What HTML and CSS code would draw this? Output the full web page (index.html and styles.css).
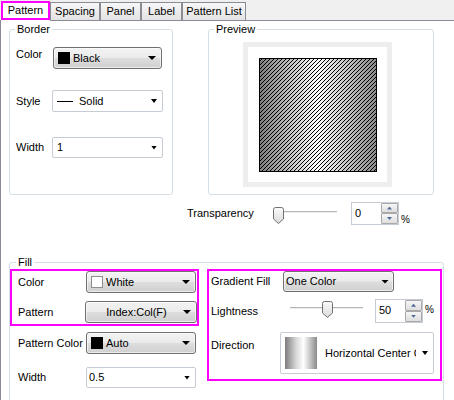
FILE: index.html
```html
<!DOCTYPE html>
<html lang="en">
<head>
<meta charset="utf-8">
<title>Pattern</title>
<link rel="stylesheet" href="styles.css">
</head>
<body>
<div class="tabbar">
  <div class="tab tab-sel">Pattern</div>
  <div class="tab tab-spacing">Spacing</div>
  <div class="tab tab-panel">Panel</div>
  <div class="tab tab-label">Label</div>
  <div class="tab tab-plist">Pattern List</div>
</div>
<div class="page">
  <div class="top-row">
    <fieldset class="group group-border">
      <legend class="legend-border">Border</legend>
      <div class="row row-bcolor">
        <span class="lbl lbl-bcolor">Color</span>
        <div class="combo combo-btn combo-bcolor">
          <span class="swatch swatch-black"></span>
          <span class="ctext ctext-swatch">Black</span>
          <span class="arrow"></span>
        </div>
      </div>
      <div class="row row-bstyle">
        <span class="lbl lbl-b2">Style</span>
        <div class="combo combo-edit combo-bwide">
          <span class="line-sample"></span>
          <span class="ctext ctext-solid">Solid</span>
          <span class="arrow arrow-sm"></span>
        </div>
      </div>
      <div class="row row-bwidth">
        <span class="lbl lbl-b2">Width</span>
        <div class="combo combo-edit combo-bwide combo-short">
          <span class="ctext ctext-pad4">1</span>
          <span class="arrow arrow-sm"></span>
        </div>
      </div>
    </fieldset>
    <fieldset class="group group-preview">
      <legend class="legend-preview">Preview</legend>
      <div class="frame">
        <svg class="pattern" width="118" height="114" viewBox="0 0 118 114">
          <defs>
            <linearGradient id="pgrad" x1="0" y1="0" x2="1" y2="0">
              <stop offset="0" stop-color="#7c7c7c"/>
              <stop offset="0.5" stop-color="#ffffff"/>
              <stop offset="1" stop-color="#888888"/>
            </linearGradient>
            <pattern id="hatch" width="4" height="4" patternUnits="userSpaceOnUse">
              <rect x="3" y="0" width="1" height="1" fill="#000"/>
              <rect x="2" y="1" width="1" height="1" fill="#000"/>
              <rect x="1" y="2" width="1" height="1" fill="#000"/>
              <rect x="0" y="3" width="1" height="1" fill="#000"/>
            </pattern>
          </defs>
          <rect width="118" height="114" fill="url(#pgrad)"/>
          <rect width="118" height="114" fill="url(#hatch)" shape-rendering="crispEdges"/>
          <rect x="0.5" y="0.5" width="117" height="113" fill="none" stroke="#000" shape-rendering="crispEdges"/>
        </svg>
      </div>
    </fieldset>
  </div>

  <div class="row row-trans">
    <span class="lbl lbl-trans">Transparency</span>
    <svg class="slider slider-trans" width="64" height="23" viewBox="0 0 64 23">
      <defs>
        <linearGradient id="thumb1" x1="0" y1="0" x2="0" y2="1">
          <stop offset="0" stop-color="#fbfbfb"/>
          <stop offset="1" stop-color="#dadada"/>
        </linearGradient>
      </defs>
      <rect x="4" y="9" width="60" height="1" fill="#b6b6b6"/>
      <rect x="4" y="10" width="60" height="1" fill="#ececec"/>
      <path d="M0.5 2.5 Q0.5 0.5 2.5 0.5 H8.5 Q10.5 0.5 10.5 2.5 V12 L5.5 16.5 L0.5 12 Z" transform="translate(0 5)" fill="url(#thumb1)" stroke="#707070"/>
    </svg>
    <div class="spin spin-trans">
      <span class="spin-val">0</span>
      <div class="spin-btns">
        <span class="spin-btn spin-up"><span class="tri tri-up"></span></span>
        <span class="spin-btn spin-down"><span class="tri tri-down"></span></span>
      </div>
    </div>
    <span class="pct pct-trans">%</span>
  </div>

  <fieldset class="group group-fill">
    <legend class="legend-fill">Fill</legend>
    <div class="fill-cols">
      <div class="fill-left">
        <div class="hl hl-left">
          <div class="row row-fcolor">
            <span class="lbl lbl-f">Color</span>
            <div class="combo combo-btn combo-f">
              <span class="swatch swatch-white"></span>
              <span class="ctext ctext-swatch">White</span>
              <span class="arrow"></span>
            </div>
          </div>
          <div class="row row-fpattern">
            <span class="lbl lbl-fp">Pattern</span>
            <div class="combo combo-btn combo-fp">
              <span class="ctext ctext-center">Index:Col(F)</span>
              <span class="arrow"></span>
            </div>
          </div>
        </div>
        <div class="row row-pcolor">
          <span class="lbl lbl-f">Pattern Color</span>
          <div class="combo combo-btn combo-f">
            <span class="swatch swatch-black"></span>
            <span class="ctext ctext-swatch">Auto</span>
            <span class="arrow"></span>
          </div>
        </div>
        <div class="row row-fwidth">
          <span class="lbl lbl-f">Width</span>
          <div class="combo combo-edit combo-f combo-short">
            <span class="ctext ctext-pad2">0.5</span>
            <span class="arrow arrow-sm"></span>
          </div>
        </div>
      </div>

      <div class="hl hl-right">
        <div class="row row-grad">
          <span class="lbl lbl-r">Gradient Fill</span>
          <div class="combo combo-btn combo-grad">
            <span class="ctext ctext-pad2">One Color</span>
            <span class="arrow arrow-r4"></span>
          </div>
        </div>
        <div class="row row-light">
          <span class="lbl lbl-r">Lightness</span>
          <svg class="slider slider-light" width="84" height="24" viewBox="0 0 84 24">
            <defs>
              <linearGradient id="thumb2" x1="0" y1="0" x2="0" y2="1">
                <stop offset="0" stop-color="#fbfbfb"/>
                <stop offset="1" stop-color="#dadada"/>
              </linearGradient>
            </defs>
            <rect x="7" y="8" width="73" height="1" fill="#b6b6b6"/>
            <rect x="7" y="9" width="73" height="1" fill="#ececec"/>
            <path d="M0.5 2.5 Q0.5 0.5 2.5 0.5 H8.5 Q10.5 0.5 10.5 2.5 V12 L5.5 16.5 L0.5 12 Z" transform="translate(39 2)" fill="url(#thumb2)" stroke="#707070"/>
          </svg>
          <div class="spin spin-light">
            <span class="spin-val">50</span>
            <div class="spin-btns">
              <span class="spin-btn spin-up"><span class="tri tri-up"></span></span>
              <span class="spin-btn spin-down"><span class="tri tri-down"></span></span>
            </div>
          </div>
          <span class="pct pct-light">%</span>
        </div>
        <div class="row row-dir">
          <span class="lbl lbl-dir">Direction</span>
          <div class="combo combo-edit combo-dir">
            <span class="dir-swatch"></span>
            <span class="dir-text">Horizontal Center Color</span>
            <span class="arrow arrow-sm arrow-dir"></span>
          </div>
        </div>
      </div>
    </div>
  </fieldset>
</div>
</body>
</html>
```

FILE: styles.css
```css
* { box-sizing: border-box; }
html, body { margin: 0; padding: 0; }
body {
  width: 454px;
  height: 400px;
  overflow: hidden;
  background: #fff;
  color: #000;
  font-family: "Liberation Sans", Arial, sans-serif;
  font-size: 11px;
  line-height: 13px;
}

/* ---------- tabs ---------- */
.tabbar {
  display: flex;
  align-items: flex-end;
  height: 21px;
  padding-left: 1px;
  background: #f0f0f0;
  border-bottom: 1px solid #898c95;
}
.tab {
  height: 18px;
  border: 1px solid #898c95;
  border-bottom: none;
  background: linear-gradient(#f7f7f7, #e3e3e3);
  text-align: center;
  line-height: 17px;
  white-space: nowrap;
}
.tab-sel {
  width: 49px;
  height: 19px;
  border: 2px solid #ff00ff;
  background: #fff;
  line-height: 15px;
  box-shadow: 0 1px 0 #fff;
}
.tab-spacing { width: 50px; }
.tab-panel { width: 41px; }
.tab-label { width: 41px; }
.tab-plist { width: 64px; }

/* ---------- page ---------- */
.page {
  height: 379px;
  padding-top: 2px;
  border-left: 1px solid #898c95;
}
.top-row {
  display: flex;
  margin-left: 8px;
}
.group {
  margin: 0;
  padding: 0;
  min-width: 0;
  border: 1px solid #d5dfe5;
  border-radius: 3px;
}
.group legend {
  padding: 0 2px;
  line-height: 13px;
}
.legend-border { margin-left: 5px; }
.legend-preview { margin-left: 5px; }
.legend-fill { margin-left: 6px; }

.group-border { width: 164px; height: 172px; }
.group-preview { width: 226px; height: 172px; margin-left: 35px; }

.row { display: flex; align-items: center; }
.lbl { flex: none; white-space: nowrap; }

/* border group rows */
.row-bcolor { margin-top: 11px; height: 22px; padding-left: 6px; }
.row-bstyle { margin-top: 21px; height: 22px; padding-left: 6px; }
.row-bwidth { margin-top: 25px; height: 21px; padding-left: 6px; }
.lbl-bcolor { width: 37px; align-self: flex-start; padding-top: 1px; }
.lbl-b2 { width: 36px; }

/* combos */
.combo {
  display: flex;
  align-items: center;
  flex: none;
  height: 22px;
  white-space: nowrap;
}
.combo-btn {
  border: 1px solid #707070;
  border-radius: 3px;
  background: linear-gradient(#f3f3f3 0%, #ebebeb 48%, #dddddd 52%, #d0d0d0 100%);
  box-shadow: inset 0 0 0 1px rgba(255,255,255,0.6);
}
.combo-edit {
  border: 1px solid #c5ccd3;
  border-radius: 2px;
  background: #fff;
}
.combo-bcolor { width: 109px; }
.combo-bwide { width: 111px; }
.combo-short { height: 21px; }
.combo-f { width: 110px; }
.combo-fp { width: 112px; }
.combo-grad { width: 111px; height: 21px; }
.combo-dir { width: 154px; height: 42px; }

.swatch {
  flex: none;
  width: 12px;
  height: 12px;
  margin-left: 4px;
  border: 1px solid #000;
}
.swatch-black { background: #000; }
.swatch-white { background: #fff; border-color: #8e8e8e; }
.ctext-swatch { margin-left: 3px; }
.ctext-pad4 { padding-left: 4px; }
.ctext-pad2 { padding-left: 2px; }
.ctext-center { flex: 1; text-align: center; padding-left: 4px; }
.line-sample {
  flex: none;
  width: 16px;
  height: 1px;
  margin-left: 4px;
  background: #000;
}
.ctext-solid { margin-left: 6px; }

.arrow {
  flex: none;
  width: 8px;
  height: 4px;
  margin-left: auto;
  margin-right: 5px;
  background: #000;
  clip-path: polygon(0 0, 100% 0, 50% 100%);
}
.ctext-center + .arrow { margin-left: 0; }
.arrow-sm { width: 6px; height: 4px; }
.arrow-r4 { margin-right: 4px; }

/* preview */
.frame {
  width: 149px;
  height: 145px;
  margin-top: 6px;
  margin-left: 34px;
  padding: 11px 10px 10px 11px;
  border: 5px solid #eeeeee;
  background: #fff;
}
.pattern { display: block; }

/* transparency row */
.row-trans { margin-top: 7px; height: 23px; }
.lbl-trans { margin-left: 186px; width: 86px; }
.slider { display: block; flex: none; }
.spin {
  display: flex;
  flex: none;
  width: 48px;
  height: 23px;
  border: 1px solid #c5ccd3;
  background: #fff;
}
.spin-trans { margin-left: 14px; }
.spin-val { flex: 1; padding-left: 3px; line-height: 21px; }
.spin-btns { display: flex; flex-direction: column; width: 17px; }
.spin-btn {
  display: flex;
  align-items: center;
  justify-content: center;
  flex: 1;
  border: 1px solid #a9a9a9;
  border-radius: 1px;
  background: linear-gradient(#f6f6f6, #dedede);
}
.spin-up { flex: 10; }
.spin-down { flex: 11; }
.tri {
  width: 5px;
  height: 3px;
  background: #4e6a96;
}
.tri-up { clip-path: polygon(50% 0, 100% 100%, 0 100%); }
.tri-down { clip-path: polygon(0 0, 100% 0, 50% 100%); }
.pct { flex: none; font-size: 10px; line-height: 11px; }
.pct-trans { align-self: flex-end; margin-left: 2px; }

/* fill group */
.group-fill {
  width: 435px;
  height: 150px;
  margin-top: 31px;
  margin-left: 8px;
}
.fill-cols { display: flex; }
.fill-left { width: 189px; flex: none; }
.hl { border: 2px solid #ff00ff; }
.hl-left { height: 57px; }
.hl-right { width: 235px; height: 112px; margin-left: 8px; flex: none; }

.row-fcolor { height: 22px; padding-left: 6px; }
.row-fpattern { height: 22px; margin-top: 8px; padding-left: 6px; }
.lbl-f { width: 68px; }
.lbl-fp { width: 67px; }
.row-pcolor { height: 22px; margin-top: 6px; padding-left: 8px; }
.row-fwidth { height: 21px; margin-top: 13px; padding-left: 8px; }

.row-grad { height: 21px; padding-left: 2px; }
.lbl-r { width: 72px; }
.row-light { height: 24px; margin-top: 7px; padding-left: 2px; }
.spin-light { height: 24px; margin-left: 8px; }
.pct-light { align-self: flex-start; margin-top: 5px; margin-left: 2px; }
.row-dir { height: 42px; margin-top: 9px; padding-left: 2px; }
.lbl-dir { width: 69px; align-self: flex-start; margin-top: 7px; }
.dir-swatch {
  flex: none;
  width: 32px;
  height: 32px;
  margin-left: 4px;
  background: linear-gradient(to right, #7c7c7c 0%, #d8d8d8 35%, #ffffff 58%, #8a8a8a 100%);
}
.dir-text {
  flex: none;
  width: 91px;
  margin-left: 8px;
  overflow: hidden;
  white-space: nowrap;
}
.arrow-dir { margin-right: 5px; }
```
